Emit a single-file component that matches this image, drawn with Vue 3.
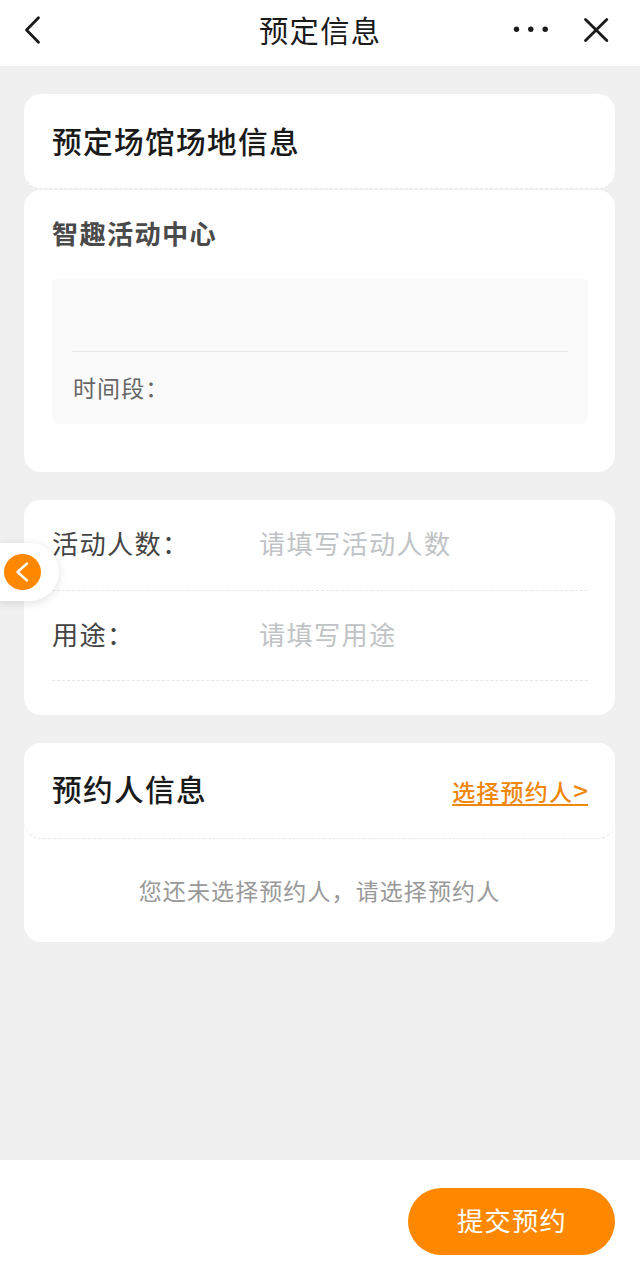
<template>
  <div class="page">
    <header class="navbar">
      <svg class="nav-back" width="20" height="32" viewBox="0 0 20 32">
        <path d="M16.5 3.8 L4.5 16 L16.5 28.2" />
      </svg>
      <h1 class="nav-title">预定信息</h1>
      <div class="nav-actions">
        <svg width="38" height="10" viewBox="0 0 38 10">
          <circle cx="4.5" cy="4.2" r="2.7" />
          <circle cx="18.8" cy="4.2" r="2.7" />
          <circle cx="33.2" cy="4.2" r="2.7" />
        </svg>
        <svg class="nav-close" width="28" height="28" viewBox="0 0 28 28">
          <path d="M3.5 3.5 L24.8 24.5 M24.8 3.5 L3.5 24.5" />
        </svg>
      </div>
    </header>

    <main class="content">
      <section class="venue">
        <div class="card-header venue-header">
          <h2 class="card-title">预定场馆场地信息</h2>
        </div>
        <div class="card venue-card">
          <h3 class="venue-name">{{ venue.name }}</h3>
          <div class="venue-detail">
            <div class="venue-field">{{ venue.field }}</div>
            <div class="venue-time">时间段：{{ venue.time }}</div>
          </div>
        </div>
      </section>

      <section class="card form-card">
        <label v-for="item in fields" :key="item.key" class="form-row">
          <span class="form-label">{{ item.label }}</span>
          <input v-model="form[item.key]" class="form-input" type="text" :placeholder="item.placeholder" />
        </label>
      </section>

      <section class="card person-card">
        <div class="card-header">
          <h2 class="card-title">预约人信息</h2>
          <a class="person-link">选择预约人<span class="person-arrow">&gt;</span></a>
        </div>
        <p class="person-empty">您还未选择预约人，请选择预约人</p>
      </section>
    </main>

    <footer class="footer">
      <button class="submit-btn" type="button">提交预约</button>
    </footer>

    <div class="side-tab">
      <div class="side-icon">
        <svg width="37" height="36" viewBox="0 0 37 36">
          <path d="M23 9.5 L13.5 18 L23 26.5" />
        </svg>
      </div>
    </div>
  </div>
</template>

<script setup>
import { reactive } from 'vue';

const venue = reactive({
  name: '智趣活动中心',
  field: '',
  time: '',
});

const fields = [
  { key: 'count', label: '活动人数：', placeholder: '请填写活动人数' },
  { key: 'purpose', label: '用途：', placeholder: '请填写用途' },
];

const form = reactive({
  count: '',
  purpose: '',
});
</script>

<style>
body {
  margin: 0;
  background: #f0f0f0;
}
</style>

<style scoped>
.page {
  position: relative;
  display: flex;
  flex-direction: column;
  height: 1282px;
  background: #f0f0f0;
  font-family: "Noto Sans CJK SC", sans-serif;
  letter-spacing: 1.3px;
  overflow: hidden;
}

h1,
h2,
h3,
p {
  margin: 0;
}

.navbar {
  display: flex;
  align-items: center;
  justify-content: space-between;
  box-sizing: border-box;
  height: 66px;
  padding: 0 30px 6px 22px;
  background: #fff;
}

.navbar svg {
  display: block;
  fill: #1a1a1a;
}

.nav-back path,
.nav-close path {
  fill: none;
  stroke: #1a1a1a;
  stroke-width: 2.8;
  stroke-linecap: round;
  stroke-linejoin: round;
}

.nav-title {
  flex: 1;
  padding: 0 0 2px 217px;
  font-size: 29.3px;
  font-weight: 400;
  line-height: 40px;
  color: #1a1a1a;
}

.nav-actions {
  display: flex;
  align-items: center;
  gap: 32px;
}

.content {
  flex: 1;
  display: flex;
  flex-direction: column;
  gap: 28px;
  padding: 28px 25px 0 24px;
}

.card,
.card-header {
  background: #fff;
  border-radius: 17px;
}

.card-header {
  display: flex;
  align-items: center;
  justify-content: space-between;
  box-sizing: border-box;
  height: 96px;
  padding: 0 27px 3px 28px;
  border-bottom: 1px dashed #e6e6e6;
}

.venue-header {
  height: 95px;
  margin-bottom: 1px;
  padding-bottom: 1px;
}

.card-title {
  font-size: 29.7px;
  font-weight: 500;
  line-height: 44px;
  color: #1a1a1a;
}

.venue-card {
  box-sizing: border-box;
  height: 282px;
  padding: 21px 27px 0 28px;
}

.venue-name {
  font-size: 26.2px;
  font-weight: 700;
  line-height: 44px;
  color: #4a4a4a;
}

.venue-detail {
  height: 146px;
  margin-top: 23px;
  padding: 0 20px;
  box-sizing: border-box;
  border-radius: 6px;
  background: #fafafa;
}

.venue-field {
  height: 73px;
  border-bottom: 1px solid #e8e8e8;
}

.venue-time {
  padding-left: 1px;
  font-size: 23px;
  letter-spacing: 1.1px;
  line-height: 70px;
  color: #666;
}

.form-card {
  box-sizing: border-box;
  height: 215px;
  padding: 0 27px 0 28px;
}

.form-row {
  display: flex;
  align-items: center;
  box-sizing: border-box;
  height: 90.5px;
  padding-bottom: 2px;
  border-bottom: 1px dashed #e6e6e6;
}

.form-row:first-child {
  padding-bottom: 3px;
}

.form-label {
  width: 207px;
  font-size: 26.2px;
  line-height: 40px;
  color: #444;
}

.form-input {
  flex: 1;
  min-width: 0;
  height: 40px;
  padding: 0 0 1px;
  border: none;
  outline: none;
  background: none;
  font-family: inherit;
  font-size: 26.2px;
  letter-spacing: inherit;
  color: #444;
}

.form-input::placeholder {
  color: #c0c3c5;
}

.person-card {
  height: 199px;
}

.person-link {
  font-size: 23px;
  letter-spacing: 1.2px;
  font-weight: 500;
  color: #f0860a;
  text-decoration: underline;
  text-decoration-thickness: 2px;
  text-underline-offset: 3px;
}

.person-arrow {
  font-size: 26px;
  letter-spacing: 0;
}

.person-empty {
  font-size: 23px;
  letter-spacing: 1.1px;
  line-height: 103px;
  text-align: center;
  color: #999;
}

.footer {
  display: flex;
  justify-content: flex-end;
  box-sizing: border-box;
  height: 122px;
  padding: 28px 25px 0 0;
  background: #fff;
}

.submit-btn {
  width: 207px;
  height: 67px;
  padding: 0 0 3px 1px;
  border: none;
  border-radius: 34px;
  background: #ff8800;
  font-family: inherit;
  font-size: 26.2px;
  letter-spacing: inherit;
  color: #fff;
}

/* floating drawer handle on the left edge */
.side-tab {
  position: absolute;
  top: 543px;
  left: 0;
  display: flex;
  align-items: center;
  box-sizing: border-box;
  width: 59px;
  height: 58px;
  padding-left: 4px;
  border-radius: 0 29px 29px 0;
  background: #fff;
  box-shadow: 0 2px 10px rgba(0, 0, 0, 0.12);
}

.side-icon {
  width: 37px;
  height: 36px;
  border-radius: 50%;
  background: #ff8800;
}

.side-icon svg {
  display: block;
  fill: none;
  stroke: #fff;
  stroke-width: 2.4;
  stroke-linecap: round;
  stroke-linejoin: round;
}
</style>
